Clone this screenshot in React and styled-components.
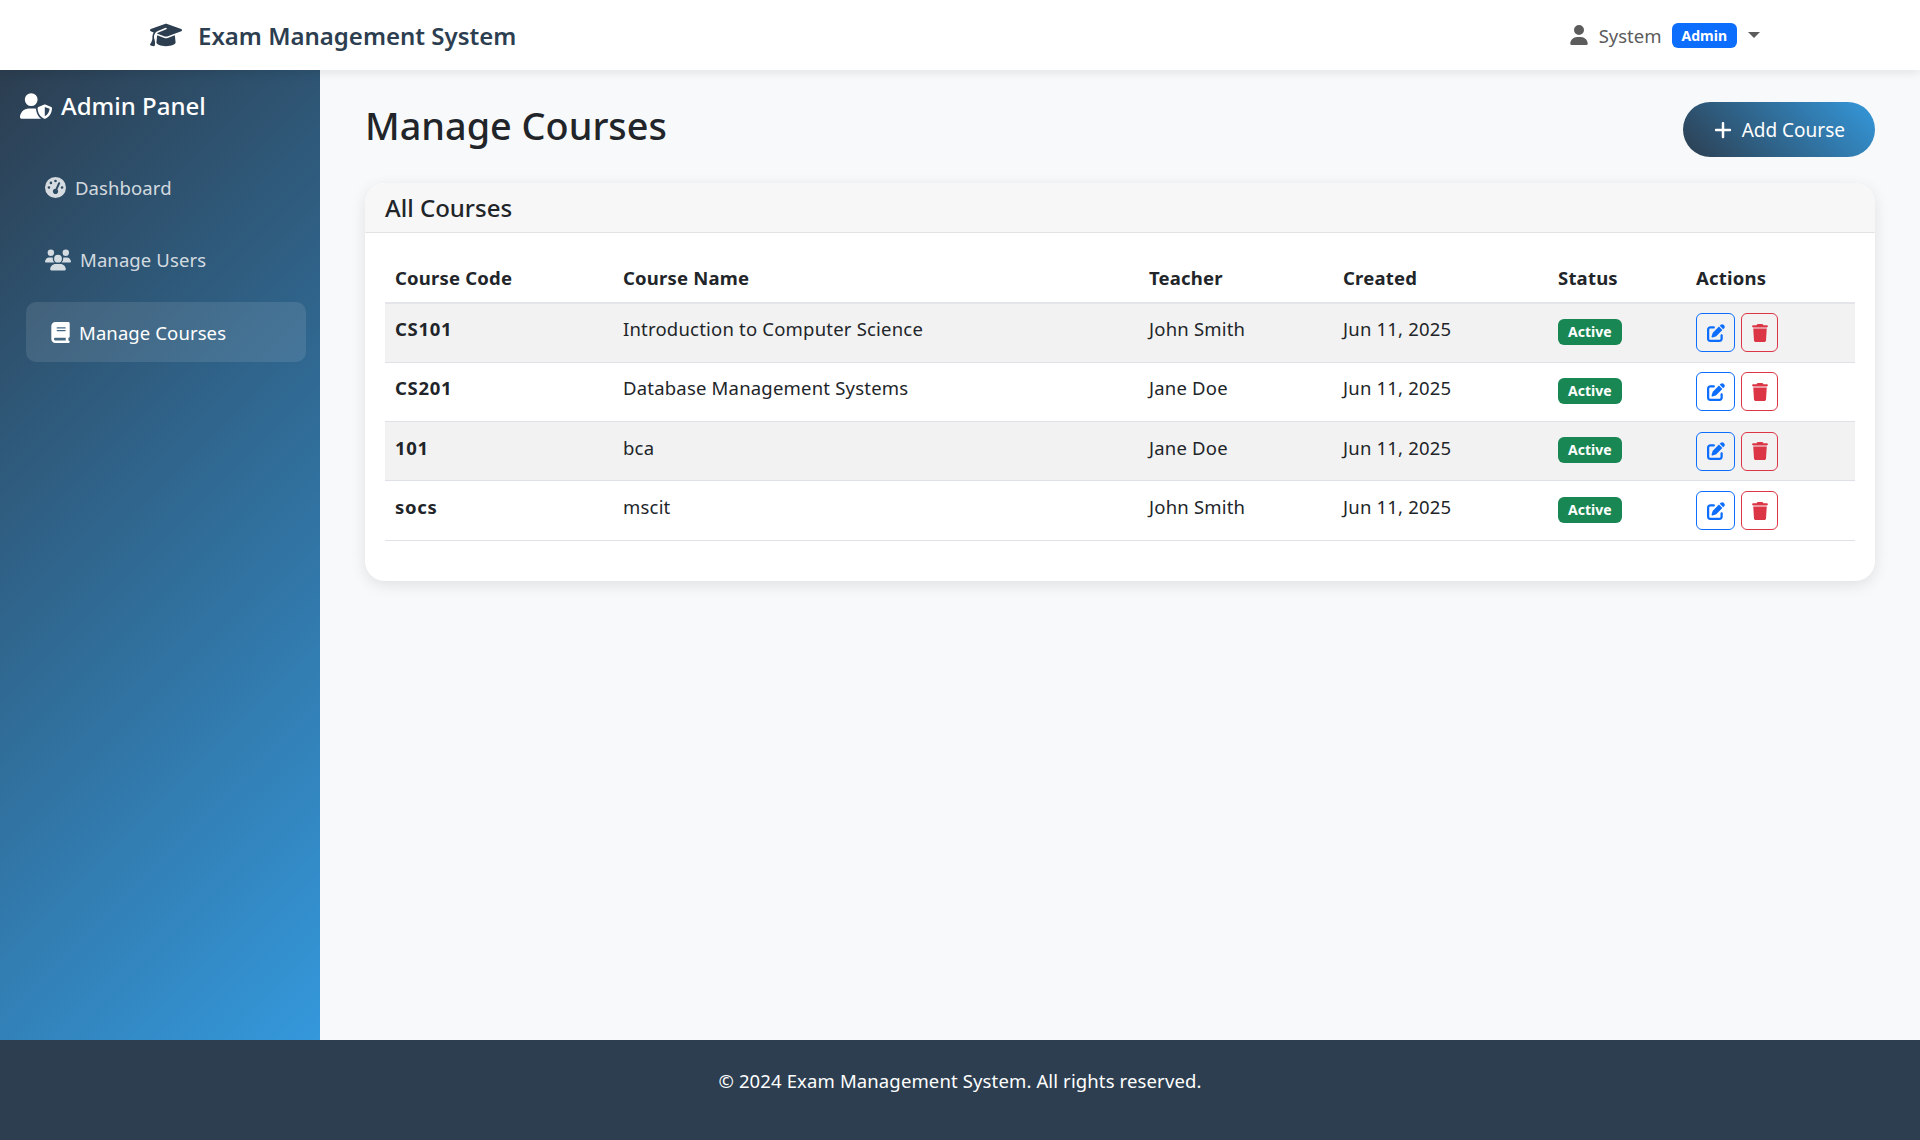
import React from 'react';
import styled, { createGlobalStyle } from 'styled-components';
import {
  FaGraduationCap, FaUser, FaUserShield, FaGaugeHigh, FaUsers, FaBook,
  FaPlus, FaPenToSquare, FaTrash,
} from 'react-icons/fa6';

const courses = [
  { code: 'CS101', name: 'Introduction to Computer Science', teacher: 'John Smith', created: 'Jun 11, 2025' },
  { code: 'CS201', name: 'Database Management Systems', teacher: 'Jane Doe', created: 'Jun 11, 2025' },
  { code: '101', name: 'bca', teacher: 'Jane Doe', created: 'Jun 11, 2025' },
  { code: 'socs', name: 'mscit', teacher: 'John Smith', created: 'Jun 11, 2025' },
];

const GlobalStyle = createGlobalStyle`
  * { box-sizing: border-box; }
  html, body { margin: 0; padding: 0; }
  body {
    font-family: "Noto Sans", "Open Sans", sans-serif;
    font-size: 18.5px;
    color: #212529;
    background: #f8f9fa;
  }
`;

const App = () => (
  <Page>
    <GlobalStyle />
    <Navbar>
      <Brand>
        <FaGraduationCap size={32} />
        <span>Exam Management System</span>
      </Brand>
      <UserMenu>
        <FaUser size={20} />
        <UserName>System</UserName>
        <RoleBadge>Admin</RoleBadge>
        <Caret />
      </UserMenu>
    </Navbar>
    <Body>
      <Sidebar>
        <SidebarTitle>
          <FaUserShield size={32} />
          <span>Admin Panel</span>
        </SidebarTitle>
        <SideNav>
          <SideLink><FaGaugeHigh size={21} /><span>Dashboard</span></SideLink>
          <SideLink><FaUsers size={26} /><span>Manage Users</span></SideLink>
          <SideLink $active><FaBook size={21} /><span>Manage Courses</span></SideLink>
        </SideNav>
      </Sidebar>
      <Main>
        <PageHeader>
          <PageTitle>Manage Courses</PageTitle>
          <AddButton><FaPlus size={20} /><span>Add Course</span></AddButton>
        </PageHeader>
        <Card>
          <CardHeader>All Courses</CardHeader>
          <CardBody>
            <Table>
              <colgroup>
                <col style={{ width: 228 }} />
                <col style={{ width: 526 }} />
                <col style={{ width: 194 }} />
                <col style={{ width: 215 }} />
                <col style={{ width: 138 }} />
                <col style={{ width: 169 }} />
              </colgroup>
              <thead>
                <tr>
                  <Th>Course Code</Th>
                  <Th>Course Name</Th>
                  <Th>Teacher</Th>
                  <Th>Created</Th>
                  <Th>Status</Th>
                  <Th>Actions</Th>
                </tr>
              </thead>
              <tbody>
                {courses.map((c) => (
                  <Row key={c.code}>
                    <Td><Code>{c.code}</Code></Td>
                    <Td>{c.name}</Td>
                    <Td>{c.teacher}</Td>
                    <Td>{c.created}</Td>
                    <Td><StatusBadge>Active</StatusBadge></Td>
                    <Td>
                      <Actions>
                        <IconButton $color="#0d6efd" $width={39}><FaPenToSquare size={18} /></IconButton>
                        <IconButton $color="#dc3545" $width={37}><FaTrash size={18} /></IconButton>
                      </Actions>
                    </Td>
                  </Row>
                ))}
              </tbody>
            </Table>
          </CardBody>
        </Card>
      </Main>
    </Body>
    <Footer>© 2024 Exam Management System. All rights reserved.</Footer>
  </Page>
);

const Page = styled.div`
  min-height: 1140px;
  display: flex;
  flex-direction: column;
`;

const Navbar = styled.nav`
  height: 70px;
  padding: 0 150px;
  background: #fff;
  box-shadow: 0 2px 10px rgba(0, 0, 0, 0.1);
  display: flex;
  align-items: center;
  justify-content: space-between;
  position: relative;
  z-index: 2;
`;

const Brand = styled.div`
  display: flex;
  align-items: center;
  gap: 16px;
  color: #2c3e50;
  font-size: 24px;
  font-weight: 600;
`;

const UserMenu = styled.div`
  display: flex;
  align-items: center;
  color: #5c5c5c;
  margin-right: 10px;
`;

const UserName = styled.span`
  margin: 0 10px;
`;

const RoleBadge = styled.span`
  background: #0d6efd;
  color: #fff;
  font-size: 14px;
  font-weight: 700;
  padding: 3px 10px;
  border-radius: 6px;
  margin-right: 11px;
`;

const Caret = styled.span`
  width: 0;
  height: 0;
  margin-bottom: 1px;
  border-top: 6px solid #5c5c5c;
  border-left: 6px solid transparent;
  border-right: 6px solid transparent;
`;

const Body = styled.div`
  flex: 1;
  display: flex;
`;

const Sidebar = styled.aside`
  width: 320px;
  height: 970px;
  padding: 19px 14px 0 26px;
  color: #fff;
  background: linear-gradient(135deg, #2c3e50 0%, #3498db 100%);
`;

const SidebarTitle = styled.h2`
  margin: 0 0 35px -6px;
  display: flex;
  align-items: center;
  gap: 9px;
  font-size: 24px;
  font-weight: 500;
`;

const SideNav = styled.div`
  display: flex;
  flex-direction: column;
  gap: 12.5px;
`;

const SideLink = styled.a`
  height: 60px;
  padding: 0 ${(p) => (p.$active ? '24px' : '19px')};
  display: flex;
  align-items: center;
  gap: ${(p) => (p.$active ? '8px' : '9px')};
  border-radius: 10px;
  letter-spacing: 0.1px;
  color: ${(p) => (p.$active ? '#fff' : 'rgba(255, 255, 255, 0.8)')};
  background: ${(p) => (p.$active ? 'rgba(255, 255, 255, 0.1)' : 'transparent')};
`;

const Main = styled.main`
  flex: 1;
  padding: 32px 45px 0;
`;

const PageHeader = styled.div`
  display: flex;
  align-items: flex-start;
  justify-content: space-between;
  margin-bottom: 26px;
`;

const PageTitle = styled.h1`
  margin: 0;
  font-size: 37.8px;
  font-weight: 500;
  line-height: 48px;
`;

const AddButton = styled.button`
  height: 55px;
  padding: 0 30px;
  border: 0;
  border-radius: 28px;
  color: #fff;
  font: inherit;
  font-size: 19px;
  display: flex;
  align-items: center;
  gap: 9px;
  background: linear-gradient(45deg, #2c3e50, #3498db);
`;

const Card = styled.section`
  height: 398px;
  background: #fff;
  border-radius: 20px;
  box-shadow: 0 4px 15px rgba(0, 0, 0, 0.1);
  overflow: hidden;
`;

const CardHeader = styled.div`
  height: 50px;
  padding: 0 20px;
  display: flex;
  align-items: center;
  font-size: 24px;
  font-weight: 500;
  background: #f7f7f7;
  border-bottom: 1px solid #e3e3e3;
`;

const CardBody = styled.div`
  padding: 20px;
`;

const Table = styled.table`
  width: 100%;
  table-layout: fixed;
  border-collapse: collapse;
  letter-spacing: 0.2px;
`;

const Th = styled.th`
  height: 50px;
  padding: 0 10px;
  text-align: left;
  font-weight: 700;
  border-bottom: 2px solid #e3e5e8;
`;

const Row = styled.tr`
  height: 59.3px;
  border-bottom: 1px solid #dee2e6;
  &:nth-child(odd) {
    background: #f2f2f2;
  }
`;

const Td = styled.td`
  padding: 0 10px 8px;
`;

const Code = styled.strong`
  letter-spacing: 0.7px;
`;

const StatusBadge = styled.span`
  display: inline-block;
  margin-top: 6px;
  background: #198754;
  color: #fff;
  font-size: 14px;
  font-weight: 700;
  line-height: 18px;
  padding: 4px 10px;
  border-radius: 6px;
  letter-spacing: 0;
  vertical-align: middle;
`;

const Actions = styled.div`
  display: flex;
  gap: 6px;
  padding-top: 8px;
`;

const IconButton = styled.button`
  width: ${(p) => p.$width}px;
  height: 39px;
  padding: 0;
  display: flex;
  align-items: center;
  justify-content: center;
  background: transparent;
  border: 1px solid ${(p) => p.$color};
  border-radius: 6px;
  color: ${(p) => p.$color};
`;

const Footer = styled.footer`
  height: 100px;
  padding-bottom: 20px;
  display: flex;
  align-items: center;
  justify-content: center;
  background: #2c3e50;
  color: #fff;
  letter-spacing: 0.13px;
`;

export default App;
